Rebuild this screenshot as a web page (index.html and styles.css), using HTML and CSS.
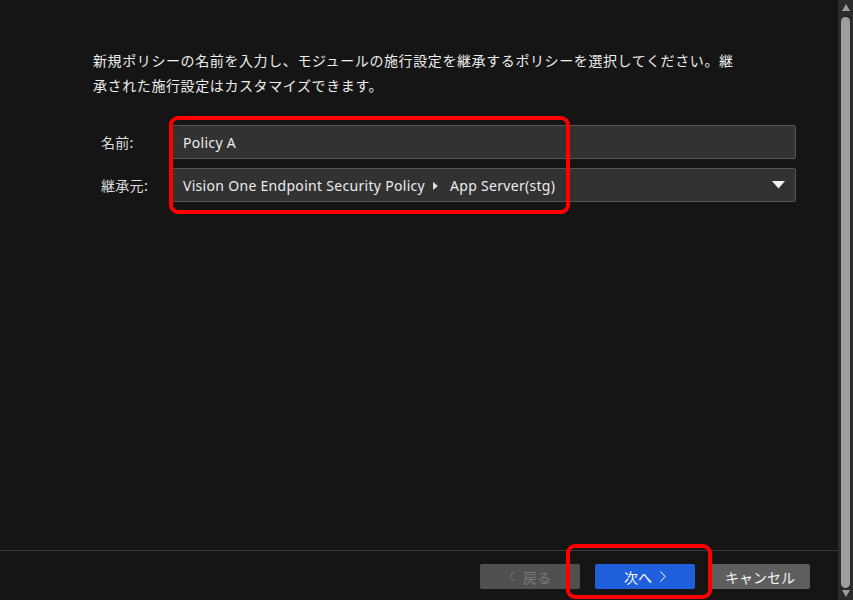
FILE: index.html
```html
<!DOCTYPE html>
<html lang="ja">
<head>
<meta charset="utf-8">
<title>ポリシー</title>
<link rel="stylesheet" href="styles.css">
</head>
<body>
<div class="window">
  <div class="main">
    <div class="content">
      <p class="intro">新規ポリシーの名前を入力し、モジュールの施行設定を継承するポリシーを選択してください。継承された施行設定はカスタマイズできます。</p>
      <div class="form">
        <label class="label">名前:</label>
        <div class="field">Policy A</div>
        <label class="label">継承元:</label>
        <div class="field select">
          <span>Vision One Endpoint Security Policy</span>
          <svg class="crumb" width="5" height="8" viewBox="0 0 5 8"><path d="M0 0 L5 4 L0 8 Z" fill="#e0e0e0"/></svg>
          <span>App Server(stg)</span>
          <svg class="caret" width="13" height="8" viewBox="0 0 13 8"><path d="M0 0 H13 L6.5 7.5 Z" fill="#f2f2f2"/></svg>
        </div>
      </div>
    </div>
    <div class="footer">
      <button class="btn btn-disabled"><svg width="6" height="11" viewBox="0 0 6 11"><path d="M5.5 0.5 L0.8 5.5 L5.5 10.5" fill="none" stroke="currentColor" stroke-width="1"/></svg>戻る</button>
      <button class="btn btn-primary">次へ<svg width="6" height="11" viewBox="0 0 6 11"><path d="M0.5 0.5 L5.2 5.5 L0.5 10.5" fill="none" stroke="currentColor" stroke-width="1"/></svg></button>
      <button class="btn btn-secondary">キャンセル</button>
    </div>
  </div>
  <div class="scrollbar">
    <div class="sb-arrow sb-up"></div>
    <div class="sb-thumb"></div>
    <div class="sb-arrow sb-down"></div>
  </div>
  <div class="highlight hl-form"></div>
  <div class="highlight hl-next"></div>
</div>
</body>
</html>
```
FILE: styles.css
```css
html, body {
  margin: 0;
  padding: 0;
  background: #151515;
}
body {
  font-family: "Noto Sans CJK JP", "Noto Sans", sans-serif;
  color: #ececec;
}
.window {
  position: relative;
  display: flex;
  width: 853px;
  height: 600px;
  overflow: hidden;
  background: #151515;
}
.main {
  flex: 1;
  display: flex;
  flex-direction: column;
}
.content {
  flex: 1;
  padding: 48px 0 0 93px;
}
.intro {
  margin: 0;
  width: 646px;
  font-size: 14px;
  line-height: 25px;
  letter-spacing: 0.6px;
  color: #eeeeee;
}
.form {
  margin-top: 27px;
  display: grid;
  grid-template-columns: 71px 624px;
  row-gap: 9px;
  padding-left: 8px;
  align-items: center;
}
.label {
  font-size: 14px;
  letter-spacing: 0.3px;
  color: #dcdcdc;
}
.field {
  box-sizing: border-box;
  height: 34px;
  background: #323232;
  border: 1px solid #555555;
  border-radius: 2px;
  display: flex;
  align-items: center;
  padding: 0 10px;
  font-family: "Noto Sans", "Noto Sans CJK JP", sans-serif;
  font-size: 14px;
  letter-spacing: 0.3px;
  color: #ececec;
}
.select .crumb {
  margin: 1px 12px 0 8px;
}
.select .caret {
  margin-left: auto;
  margin-right: 0;
}
.footer {
  height: 50px;
  box-sizing: border-box;
  border-top: 1px solid #3a3a3a;
  display: flex;
  justify-content: flex-end;
  align-items: flex-start;
  gap: 15px;
  padding: 13px 28px 0 0;
}
.btn {
  width: 100px;
  height: 25px;
  border: none;
  border-radius: 2px;
  font-family: "Noto Sans CJK JP", sans-serif;
  font-size: 14px;
  display: flex;
  align-items: center;
  justify-content: center;
  gap: 8px;
  padding: 0;
}
.btn-disabled {
  background: #505050;
  color: #7a7a7a;
}
.btn-primary {
  background: #1f5fdc;
  color: #ffffff;
}
.btn-secondary {
  background: #5e5e5e;
  color: #f4f4f4;
}
.scrollbar {
  width: 15px;
  background: #2b2b2b;
  display: flex;
  flex-direction: column;
  align-items: center;
  padding: 4px 0 3px;
  box-sizing: border-box;
}
.sb-arrow {
  width: 0;
  height: 0;
  border-left: 4.5px solid transparent;
  border-right: 4.5px solid transparent;
}
.sb-up {
  border-bottom: 7px solid #9c9c9c;
}
.sb-down {
  border-top: 7px solid #9c9c9c;
}
.sb-thumb {
  flex: 1;
  width: 9px;
  margin: 6px 0 2px;
  background: #9e9e9e;
  border-radius: 5px;
}
.highlight {
  position: absolute;
  box-sizing: border-box;
  border: 4px solid #ff0000;
  border-radius: 9px;
}
.hl-form {
  left: 169px;
  top: 116px;
  width: 401px;
  height: 98px;
}
.hl-next {
  left: 566px;
  top: 544px;
  width: 146px;
  height: 55px;
}
```
